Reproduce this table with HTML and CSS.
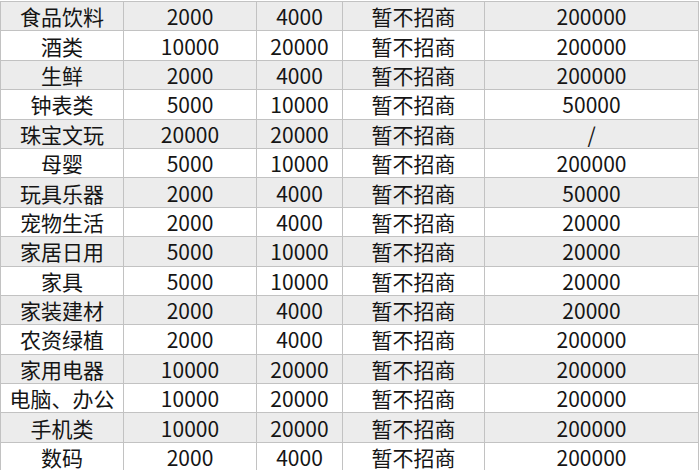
FILE: index.html
```html
<!DOCTYPE html>
<html lang="zh-CN">
<head>
<meta charset="utf-8">
<title>招商表</title>
<link rel="stylesheet" href="styles.css">
</head>
<body>
<table class="fees">
<colgroup>
<col class="c1"><col class="c2"><col class="c3"><col class="c4"><col class="c5">
</colgroup>
<tbody>
<tr class="alt"><td>食品饮料</td><td>2000</td><td>4000</td><td>暂不招商</td><td>200000</td></tr>
<tr><td>酒类</td><td>10000</td><td>20000</td><td>暂不招商</td><td>200000</td></tr>
<tr class="alt"><td>生鲜</td><td>2000</td><td>4000</td><td>暂不招商</td><td>200000</td></tr>
<tr><td>钟表类</td><td>5000</td><td>10000</td><td>暂不招商</td><td>50000</td></tr>
<tr class="alt"><td>珠宝文玩</td><td>20000</td><td>20000</td><td>暂不招商</td><td>/</td></tr>
<tr><td>母婴</td><td>5000</td><td>10000</td><td>暂不招商</td><td>200000</td></tr>
<tr class="alt"><td>玩具乐器</td><td>2000</td><td>4000</td><td>暂不招商</td><td>50000</td></tr>
<tr><td>宠物生活</td><td>2000</td><td>4000</td><td>暂不招商</td><td>20000</td></tr>
<tr class="alt"><td>家居日用</td><td>5000</td><td>10000</td><td>暂不招商</td><td>20000</td></tr>
<tr><td>家具</td><td>5000</td><td>10000</td><td>暂不招商</td><td>20000</td></tr>
<tr class="alt"><td>家装建材</td><td>2000</td><td>4000</td><td>暂不招商</td><td>20000</td></tr>
<tr><td>农资绿植</td><td>2000</td><td>4000</td><td>暂不招商</td><td>200000</td></tr>
<tr class="alt"><td>家用电器</td><td>10000</td><td>20000</td><td>暂不招商</td><td>200000</td></tr>
<tr><td>电脑、办公</td><td>10000</td><td>20000</td><td>暂不招商</td><td>200000</td></tr>
<tr class="alt"><td>手机类</td><td>10000</td><td>20000</td><td>暂不招商</td><td>200000</td></tr>
<tr><td>数码</td><td>2000</td><td>4000</td><td>暂不招商</td><td>200000</td></tr>
</tbody>
</table>
</body>
</html>
```
FILE: styles.css
```css
html, body {
  margin: 0;
  padding: 0;
  background: #ffffff;
  overflow: hidden;
}
body {
  padding-top: 1px;
  font-family: "Noto Sans CJK SC", "Noto Sans", sans-serif;
  color: #151515;
}
.fees {
  border-collapse: collapse;
  table-layout: fixed;
  width: 698px;
}
.c1 { width: 123px; }
.c2 { width: 133px; }
.c3 { width: 86px; }
.c4 { width: 142px; }
.c5 { width: 214px; }
.fees td {
  border: 1px solid #c2c2c2;
  height: 28.4px;
  padding: 0;
  text-align: center;
  vertical-align: middle;
  font-size: 21px;
  line-height: 28px;
  white-space: nowrap;
  overflow: hidden;
}
.fees tr.alt td {
  background: #ececec;
}
```
